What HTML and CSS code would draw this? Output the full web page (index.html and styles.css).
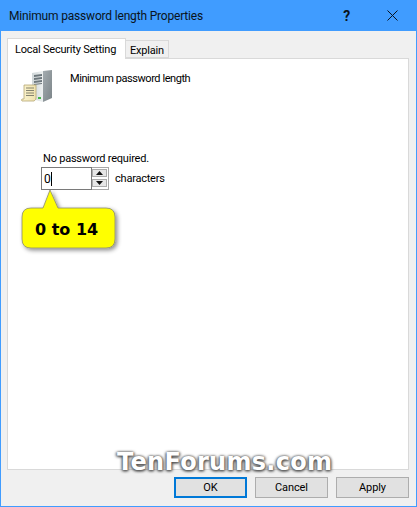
FILE: index.html
```html
<!DOCTYPE html>
<html lang="en">
<head>
<meta charset="utf-8">
<title>Minimum password length Properties</title>
<link rel="stylesheet" href="styles.css">
</head>
<body>
<div class="window">
  <header class="titlebar">
    <span class="title">Minimum password length Properties</span>
    <span class="help">?</span>
    <svg class="close" width="11" height="11" viewBox="0 0 11 11"><path d="M.5.5l10 10M10.500.5l-10 10" stroke="#0a1420" stroke-width="1" fill="none"/></svg>
  </header>
  <div class="content">
    <div class="tabs">
      <div class="tab tab-active">Local Security Setting</div>
      <div class="tab">Explain</div>
    </div>
    <section class="panel">
      <div class="policy">
        <svg class="policy-icon" width="32" height="32" viewBox="0 0 32 32">
          <defs>
            <linearGradient id="front" x1="0" x2="1" y1="0" y2="0"><stop offset="0" stop-color="#cfd6d8"/><stop offset="1" stop-color="#eef1f1"/></linearGradient>
            <linearGradient id="side" x1="0" x2="1" y1="0" y2="1"><stop offset="0" stop-color="#a4acb0"/><stop offset="1" stop-color="#7b8488"/></linearGradient>
            <linearGradient id="paper" x1="0" x2="1" y1="0" y2="0"><stop offset="0" stop-color="#fbf4cf"/><stop offset="1" stop-color="#efe2ae"/></linearGradient>
          </defs>
          <path d="M11 3l11-2v31l-11-3z" fill="url(#front)"/>
          <path d="M22 1l9-1v28l-9 4z" fill="url(#side)"/>
          <path d="M13 5l8-1v2l-8 1zM13 8l8-1v2l-8 1zM13 11l8-1v2l-8 1zM13 14l8-1v1l-8 1z" fill="#6d777c"/>
          <rect x="17" y="27" width="3" height="2" fill="#47b547"/>
          <path d="M3 15h12v13q0 2-2 3H1q-1-1 0-2h2z" fill="url(#paper)" stroke="#b5a673" stroke-width=".8"/>
          <path d="M5 18h8M5 20.500h8M5 23h8M5 25.500h8" stroke="#85836f" stroke-width="1"/>
        </svg>
        <span class="policy-name">Minimum password length</span>
      </div>
      <div class="setting">
        <p class="hint">No password required.</p>
        <div class="length-row">
          <div class="spinner">
            <div class="spin-input"><span>0</span><i class="caret"></i></div>
            <div class="spin-buttons">
              <div class="spin-btn"><svg width="7" height="4" viewBox="0 0 7 4"><path d="M3.500 0L7 4H0z" fill="#111"/></svg></div>
              <div class="spin-btn"><svg width="7" height="4" viewBox="0 0 7 4"><path d="M0 0h7L3.500 4z" fill="#111"/></svg></div>
            </div>
          </div>
          <span>characters</span>
        </div>
      </div>
    </section>
    <footer class="actions">
      <button class="btn btn-default">OK</button>
      <button class="btn">Cancel</button>
      <button class="btn">Apply</button>
    </footer>
  </div>
  <div class="callout">
    <svg class="callout-shape" width="102" height="66" viewBox="0 0 102 66">
      <defs><filter id="shadow" x="-20%" y="-20%" width="140%" height="140%"><feDropShadow dx="2" dy="2" stdDeviation="2" flood-color="#000" flood-opacity=".45"/></filter></defs>
      <path d="M29 1L37 19H85Q94 19 94 28V50Q94 59 85 59H10Q1 59 1 50V28Q1 19 10 19H22z" fill="#ffff00" stroke="#8a8a70" stroke-width=".8" filter="url(#shadow)"/>
    </svg>
    <span class="callout-text">0 to 14</span>
  </div>
  <div class="watermark">TenForums.com</div>
</div>
</body>
</html>
```
FILE: styles.css
```css
* { box-sizing: border-box; }
html, body { margin: 0; padding: 0; }
body {
  width: 417px;
  height: 507px;
  overflow: hidden;
  font-family: Roboto, "Liberation Sans", Arial, sans-serif;
  font-size: 11px;
  letter-spacing: -.22px;
  color: #000;
}
.window {
  position: relative;
  width: 417px;
  height: 507px;
  display: flex;
  flex-direction: column;
  background: #f0f0f0;
  border: 1px solid #409cff;
  border-top: 0;
}
.titlebar {
  height: 31px;
  flex: none;
  display: flex;
  align-items: center;
  background: #409cff;
  padding: 0 19px 0 9px;
  margin: 0 -1px;
}
.title { flex: 1; font-size: 12px; letter-spacing: -.18px; color: #0a1420; }
.help { font-size: 14px; font-weight: bold; color: #0a1420; margin-right: 37px; }
.close { display: block; }
.content { flex: 1; display: flex; flex-direction: column; padding: 7px 7px 8px 6px; }
.tabs { display: flex; align-items: flex-end; height: 21px; flex: none; position: relative; z-index: 1; }
.tab {
  height: 18px;
  margin-bottom: 1px;
  padding: 2px 4px 0;
  background: #f0f0f0;
  border: 1px solid #d9d9d9;
  border-left: 0;
  line-height: 15px;
  white-space: nowrap;
}
.tab-active {
  height: 21px;
  margin-bottom: 0;
  width: 119px;
  padding: 3px 0 0 7px;
  background: #fff;
  border: 1px solid #d9d9d9;
  border-bottom: 0;
}
.panel {
  flex: 1;
  margin-top: -1px;
  background: #fff;
  border: 1px solid #d9d9d9;
  padding: 11px 0 0 13px;
}
.policy { display: flex; gap: 17px; height: 64px; }
.policy-name { line-height: 14px; margin-top: 2px; letter-spacing: -.43px; }
.policy-icon { display: block; }
.setting { padding: 0 0 0 20px; margin-top: 18px; }
.hint { margin: 0 0 0 2px; line-height: 14px; }
.length-row { display: flex; align-items: center; gap: 6px; margin-top: 1px; }
.spinner { width: 68px; height: 23px; display: flex; background: #fff; }
.spin-input {
  width: 51px;
  display: flex;
  align-items: center;
  padding-left: 2px;
  font-size: 12px;
  letter-spacing: 0;
  border: 1px solid #7a7a7a;
}
.caret { display: block; width: 1px; height: 14px; background: #000; }
.spin-buttons {
  width: 17px;
  display: flex;
  flex-direction: column;
  gap: 2px;
  padding: 1px 1px 2px 0;
  border: 1px solid #a8a8a8;
  border-left: 0;
}
.spin-btn {
  flex: 1;
  display: flex;
  align-items: center;
  justify-content: center;
  background: #e6e6e6;
  border: 1px solid #acacac;
}
.spin-btn svg { display: block; }
.actions { display: flex; justify-content: flex-end; gap: 8px; padding-top: 7px; flex: none; }
.btn {
  width: 73px;
  height: 21px;
  padding: 0;
  font: 11px Roboto, "Liberation Sans", Arial, sans-serif;
  letter-spacing: -.1px;
  color: #000;
  background: #e1e1e1;
  border: 1px solid #adadad;
}
.btn-default { border: 2px solid #0078d7; }
.callout { position: absolute; left: 20px; top: 189px; width: 102px; height: 66px; }
.callout-shape { display: block; overflow: visible; }
.callout-text {
  position: absolute;
  left: 14px;
  top: 31px;
  font: bold 16px "DejaVu Sans", Verdana, sans-serif;
  letter-spacing: 0;
  color: #000;
}
.watermark {
  position: absolute;
  left: 116px;
  top: 448px;
  font: bold 24px "DejaVu Sans", Verdana, sans-serif;
  letter-spacing: .3px;
  color: #fff;
  text-shadow: 0 0 3px #555, 1px 1px 3px #555, -1px 1px 3px #777;
  white-space: nowrap;
}
```
